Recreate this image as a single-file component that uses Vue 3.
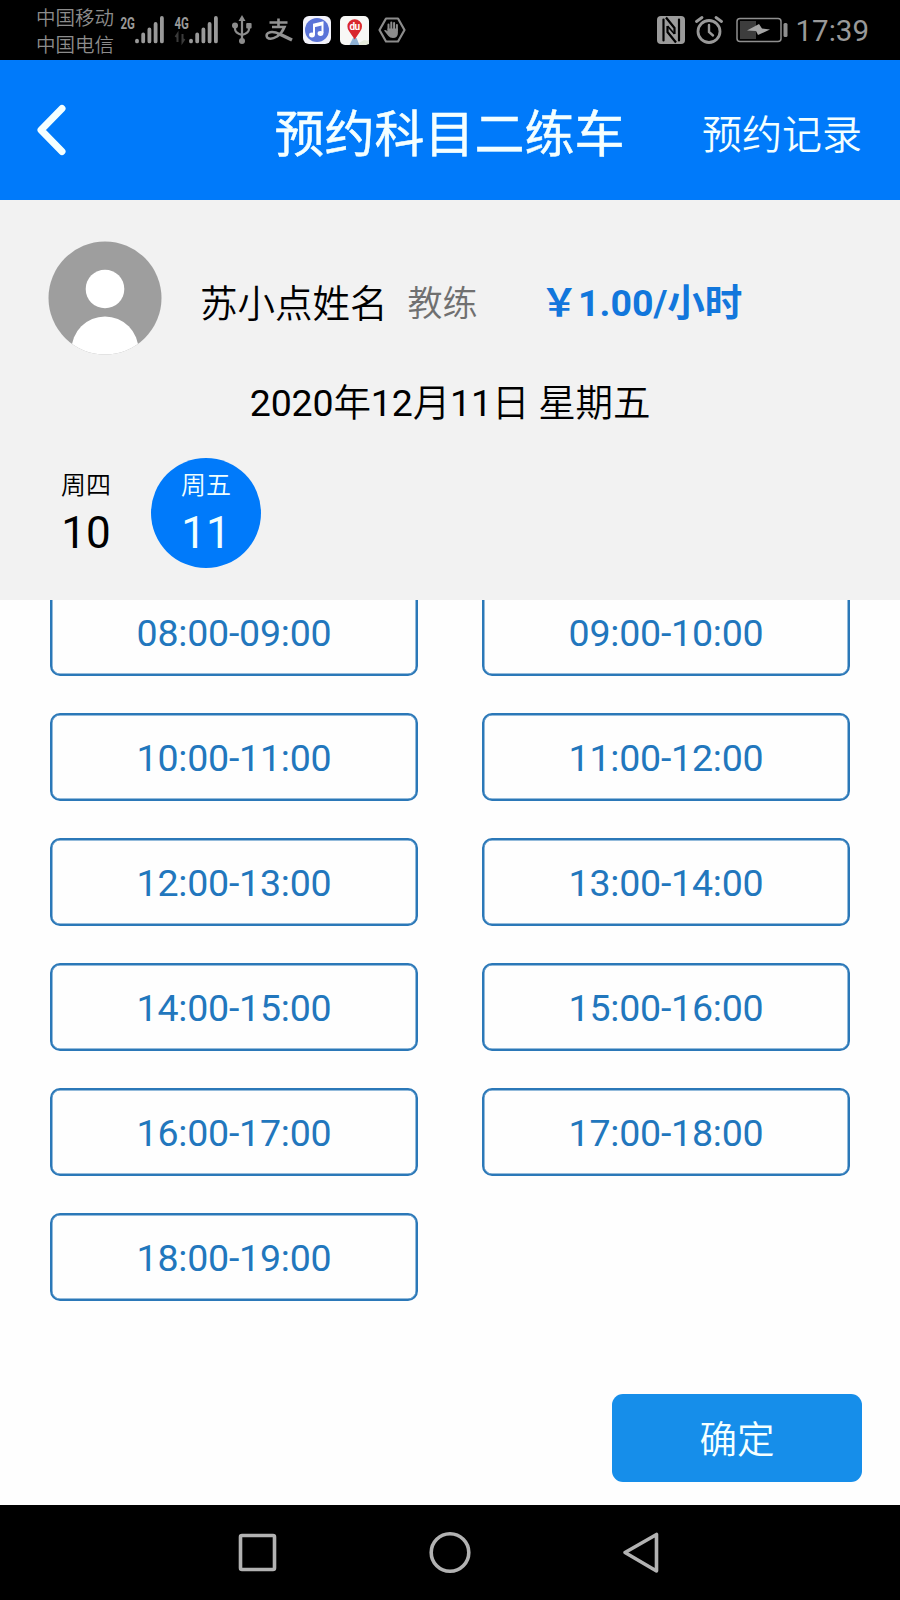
<template>
  <div class="phone">
    <div class="status-bar">
      <div class="carriers">
        <span>中国移动</span>
        <span>中国电信</span>
      </div>
      <svg v-for="net in networks" :key="net" class="signal" width="45" height="30" viewBox="0 0 45 30">
        <text x="0.500" y="13.500" textLength="14.500" lengthAdjust="spacingAndGlyphs">{{ net }}</text>
        <path v-if="net === '4G'" class="traffic" d="M3.5 27v-8l-2 3M8.5 19v8l2-3" />
        <path class="bars" d="M17 25.6v.8M23.2 19.5v6.9M29.4 14.5v11.9M35.6 9v17.4M41.9 3v23.4" />
      </svg>
      <svg class="usb" width="20" height="30" viewBox="0 0 20 30">
        <path d="M10 4v22M3 11v3q0 4 7 6M17 11v3q0 4-7 6" fill="none" stroke="#8c8c8c" stroke-width="2.2" />
        <path d="M10 0l3.500 6h-7z" fill="#8c8c8c" />
        <circle cx="3" cy="10.500" r="3" fill="#8c8c8c" />
        <rect x="14.200" y="8" width="5.400" height="5.400" rx="1" fill="#8c8c8c" />
        <circle cx="10" cy="26" r="3" fill="#8c8c8c" />
      </svg>
      <svg class="pay" width="28" height="26" viewBox="0 0 28 26">
        <path d="M13.500 1.500v8M4.500 5.500h18M7 10h12.500q-2.500 6-7.500 9.500q-6.500 4-9.800 1q-2-4 3-5.300q4-.8 9.800 2" />
        <path class="tail" d="M14.500 17l12.500 6" />
      </svg>
      <svg class="music" width="28" height="28" viewBox="0 0 28 28">
        <rect width="28" height="28" rx="6" fill="#f3f3fb" />
        <circle cx="14" cy="14" r="12" fill="#5b74d8" />
        <path d="M11 19V8.500l8.500-2V17" fill="none" stroke="#fff" stroke-width="2" />
        <path d="M11 10l8.500-2" stroke="#fff" stroke-width="2.500" />
        <ellipse cx="9" cy="19" rx="2.900" ry="2.400" fill="#fff" />
        <ellipse cx="17.500" cy="17.500" rx="2.900" ry="2.400" fill="#fff" />
      </svg>
      <svg class="map" width="29" height="29" viewBox="0 0 29 29">
        <rect width="29" height="29" rx="5" fill="#f8f8f6" />
        <path d="M9.500 29l3.500-7h3.500l3 7z" fill="#8fb2d6" />
        <path d="M19 27l5-3 5 1v3l-3 1h-6z" fill="#e6ecdc" />
        <path d="M14.700 23.500L9.300 15.500a7.300 7.300 0 1 1 10.800 0z" fill="#d9272e" />
        <text x="9.500" y="14.200" textLength="10.500">du</text>
      </svg>
      <svg class="hand" width="28" height="26" viewBox="0 0 28 26">
        <path d="M8 1.500h12L26.500 13 20 24.500H8L1.500 13z" fill="none" stroke="#8c8c8c" stroke-width="2.200" stroke-linejoin="round" />
        <path d="M10.500 13V7.500M13.300 12V5.500M16.100 12V6M18.900 13V8" stroke="#8c8c8c" stroke-width="2" stroke-linecap="round" />
        <path d="M9.500 11.500h10.400V16q0 5-5 5-3 0-4.500-2L6 13.500q1-1.500 3.500.8z" fill="#8c8c8c" />
      </svg>

      <div class="status-right">
        <svg width="28" height="28" viewBox="0 0 28 28">
          <rect width="28" height="28" rx="4" fill="#9b9b9b" />
          <path d="M6.500 3.500v21M22 3.500v21" stroke="#000" stroke-width="2.200" stroke-linecap="round" />
          <path d="M9 1.500L17.500 12v6M19 26.500L10.500 16v-6" fill="none" stroke="#000" stroke-width="2.200" />
          <path d="M10.500 10l7 8" stroke="#000" stroke-width="1.600" />
        </svg>
        <svg width="28" height="28" viewBox="0 0 28 28">
          <circle cx="14" cy="15.500" r="11" fill="none" stroke="#999" stroke-width="2.800" />
          <path d="M14 9v7l4 3.500" fill="none" stroke="#999" stroke-width="2.400" stroke-linecap="round" />
          <path d="M1.500 5.500l5.500-4M26.500 5.500l-5.500-4" stroke="#999" stroke-width="2.800" stroke-linecap="round" />
        </svg>
        <svg width="52" height="26" viewBox="0 0 52 26">
          <rect x="1" y="1.500" width="44" height="23" rx="3" fill="none" stroke="#8f8f8f" stroke-width="1.500" />
          <rect x="4" y="4" width="16" height="18" fill="#3d3d3d" />
          <path d="M11 13.500L23 7l3 4.500 8 1L22 18l-2-4z" fill="#a5a5a5" />
          <rect x="47.500" y="6" width="4" height="14" rx="1.500" fill="#8f8f8f" />
        </svg>
        <span class="clock">17:39</span>
      </div>
    </div>

    <header class="nav-bar">
      <svg class="back" width="30" height="52" viewBox="0 0 30 52">
        <path d="M25 4.500L4 26l21 21.500" />
      </svg>
      <h1 class="title">预约科目二练车</h1>
      <span class="record">预约记录</span>
    </header>

    <section class="info">
      <div class="coach">
        <svg class="avatar" width="114" height="114" viewBox="0 0 114 114">
          <defs>
            <clipPath id="avatar-clip"><circle cx="57" cy="57" r="56.500" /></clipPath>
          </defs>
          <g clip-path="url(#avatar-clip)">
            <rect width="114" height="114" fill="#9e9e9e" />
            <circle cx="57" cy="48" r="19.300" fill="#fff" />
            <circle cx="57" cy="109" r="33.500" fill="#fff" />
          </g>
        </svg>
        <span class="name">苏小点姓名</span>
        <span class="role">教练</span>
        <span class="price">￥1.00/小时</span>
      </div>
      <p class="date"><b>2020</b>年<b>12</b>月<b>11</b>日 星期五</p>
      <div class="days">
        <div
          v-for="item in days"
          :key="item.day"
          class="day"
          :class="{ active: item.day === activeDay }"
          @click="activeDay = item.day"
        >
          <span class="week">{{ item.week }}</span>
          <span class="num">{{ item.day }}</span>
        </div>
      </div>
    </section>

    <main class="content">
      <div class="slots">
        <div v-for="slot in slots" :key="slot" class="slot">{{ slot }}</div>
      </div>
      <button class="confirm">确定</button>
    </main>

    <footer class="system-nav">
      <svg width="42" height="44" viewBox="0 0 42 44">
        <rect x="3.500" y="4.500" width="34" height="34" rx="1.500" />
      </svg>
      <svg width="42" height="44" viewBox="0 0 42 44">
        <circle cx="21" cy="21.500" r="18.800" />
      </svg>
      <svg width="42" height="44" viewBox="0 0 42 44">
        <path d="M4 21.500L35.500 3.500v36.500z" />
      </svg>
    </footer>
  </div>
</template>

<script setup>
import { ref } from 'vue';

const networks = ['2G', '4G'];
const days = [
  { week: '周四', day: 10 },
  { week: '周五', day: 11 },
];
const activeDay = ref(11);

const pad = (n) => String(n).padStart(2, '0');
// 08:00 到 19:00，每小时一段
const slots = Array.from({ length: 11 }, (_, i) => `${pad(i + 8)}:00-${pad(i + 9)}:00`);
</script>

<style>
body {
  margin: 0;
  background: #fff;
}
</style>

<style scoped>
.phone {
  display: flex;
  flex-direction: column;
  width: 900px;
  height: 1600px;
  overflow: hidden;
  background: #fefefe;
  font-family: Roboto, 'Noto Sans CJK SC', sans-serif;
  font-weight: 400;
  color: #000;
}
svg {
  display: block;
  flex: none;
}

/* 状态栏 */
.status-bar {
  display: flex;
  align-items: center;
  flex: none;
  box-sizing: border-box;
  height: 60px;
  padding: 0 31px 0 36px;
  background: #000;
}
.carriers {
  display: flex;
  flex-direction: column;
  width: 84px;
  padding-top: 4px;
  font-size: 19.5px;
  line-height: 27px;
  font-weight: 350;
  color: #8c8c8c;
}
.signal {
  margin-right: 9px;
  overflow: visible;
}
.signal text {
  font-size: 16px;
  font-weight: 700;
  fill: #999;
}
.bars {
  fill: none;
  stroke: #999;
  stroke-width: 3.8;
  stroke-linecap: round;
}
.traffic {
  fill: none;
  stroke: #3a3a3a;
  stroke-width: 2;
}
.usb {
  margin-left: 4px;
}
.pay {
  margin-left: 13px;
  fill: none;
  stroke: #929292;
  stroke-width: 2.6;
}
.tail {
  stroke-width: 3.6;
}
.music {
  margin-left: 10px;
}
.map {
  margin-left: 9px;
}
.map text {
  font-size: 10px;
  font-weight: 700;
  fill: #fff;
}
.hand {
  margin-left: 9px;
}
.status-right {
  display: flex;
  align-items: center;
  gap: 10px;
  margin-left: auto;
}
.status-right svg:nth-child(3) {
  margin-left: 3px;
}
.clock {
  margin-left: -2px;
  padding-top: 2px;
  font-size: 29.5px;
  color: #999;
}

/* 标题栏 */
.nav-bar {
  display: grid;
  grid-template-columns: 1fr auto 1fr;
  align-items: center;
  flex: none;
  box-sizing: border-box;
  height: 140px;
  padding: 0 38px 0 37px;
  background: #007afa;
  color: #f4ffff;
}
.back {
  fill: none;
  stroke: #f4ffff;
  stroke-width: 7;
  stroke-linecap: round;
  stroke-linejoin: round;
}
.title {
  margin: 0;
  padding-top: 9px;
  font-size: 50px;
  font-weight: 400;
  line-height: 70px;
  -webkit-text-stroke: 0.5px #f4ffff;
}
.record {
  justify-self: end;
  padding-top: 3px;
  font-size: 40px;
  font-weight: 350;
}

/* 教练与日期 */
.info {
  flex: none;
  box-sizing: border-box;
  height: 400px;
  padding: 41px 48px 0;
  background: #f2f2f2;
}
.coach {
  display: flex;
  align-items: center;
  height: 114px;
}
.name {
  margin-left: 38px;
  padding-top: 4px;
  font-size: 37.5px;
  font-weight: 350;
}
.role {
  margin-left: 20px;
  padding-top: 4px;
  font-size: 35px;
  font-weight: 350;
  color: #707070;
}
.price {
  margin-left: 63px;
  padding-top: 2px;
  font-size: 37.5px;
  font-weight: 700;
  color: #1277dc;
}
.date {
  margin: 20px 0 0;
  font-size: 37.5px;
  line-height: 56px;
  font-weight: 350;
  letter-spacing: -0.15px;
  text-align: center;
}
.date b {
  font-weight: 400;
}
.days {
  display: flex;
  gap: 10px;
  margin: 27px 0 0 -17px;
}
.day {
  display: flex;
  flex-direction: column;
  align-items: center;
  box-sizing: border-box;
  width: 110px;
  height: 110px;
  padding-top: 13px;
  border-radius: 50%;
}
.day.active {
  background: #007afa;
  color: #f0ffff;
}
.week {
  font-size: 25px;
  line-height: 30px;
  font-weight: 350;
}
.num {
  margin-top: 6px;
  font-size: 44px;
  line-height: 52px;
}

/* 时间段 */
.content {
  display: flex;
  flex-direction: column;
  flex: 1;
  min-height: 0;
  overflow: hidden;
}
.slots {
  display: grid;
  grid-template-columns: repeat(2, 368px);
  gap: 37px 64px;
  margin: -12px 0 0 50px;
}
.slot {
  box-sizing: border-box;
  height: 88px;
  border: 2px solid #2b78b8;
  border-radius: 10px;
  box-shadow: inset 0 0 0 0.5px #2b78b8;
  font-size: 37.5px;
  line-height: 86px;
  letter-spacing: -0.2px;
  text-align: center;
  color: #2277bd;
}
.confirm {
  align-self: flex-end;
  width: 250px;
  height: 88px;
  margin: 93px 38px 0 0;
  padding: 0 0 3px;
  border: 0;
  border-radius: 11px;
  background: #168eea;
  font: inherit;
  font-size: 37.5px;
  font-weight: 350;
  color: #f4ffff;
}

/* 系统导航键 */
.system-nav {
  display: flex;
  align-items: center;
  justify-content: center;
  gap: 150px;
  flex: none;
  height: 95px;
  background: #000;
}
.system-nav svg {
  fill: none;
  stroke: #b2b2b2;
  stroke-width: 3.6;
  stroke-linejoin: round;
}
</style>
